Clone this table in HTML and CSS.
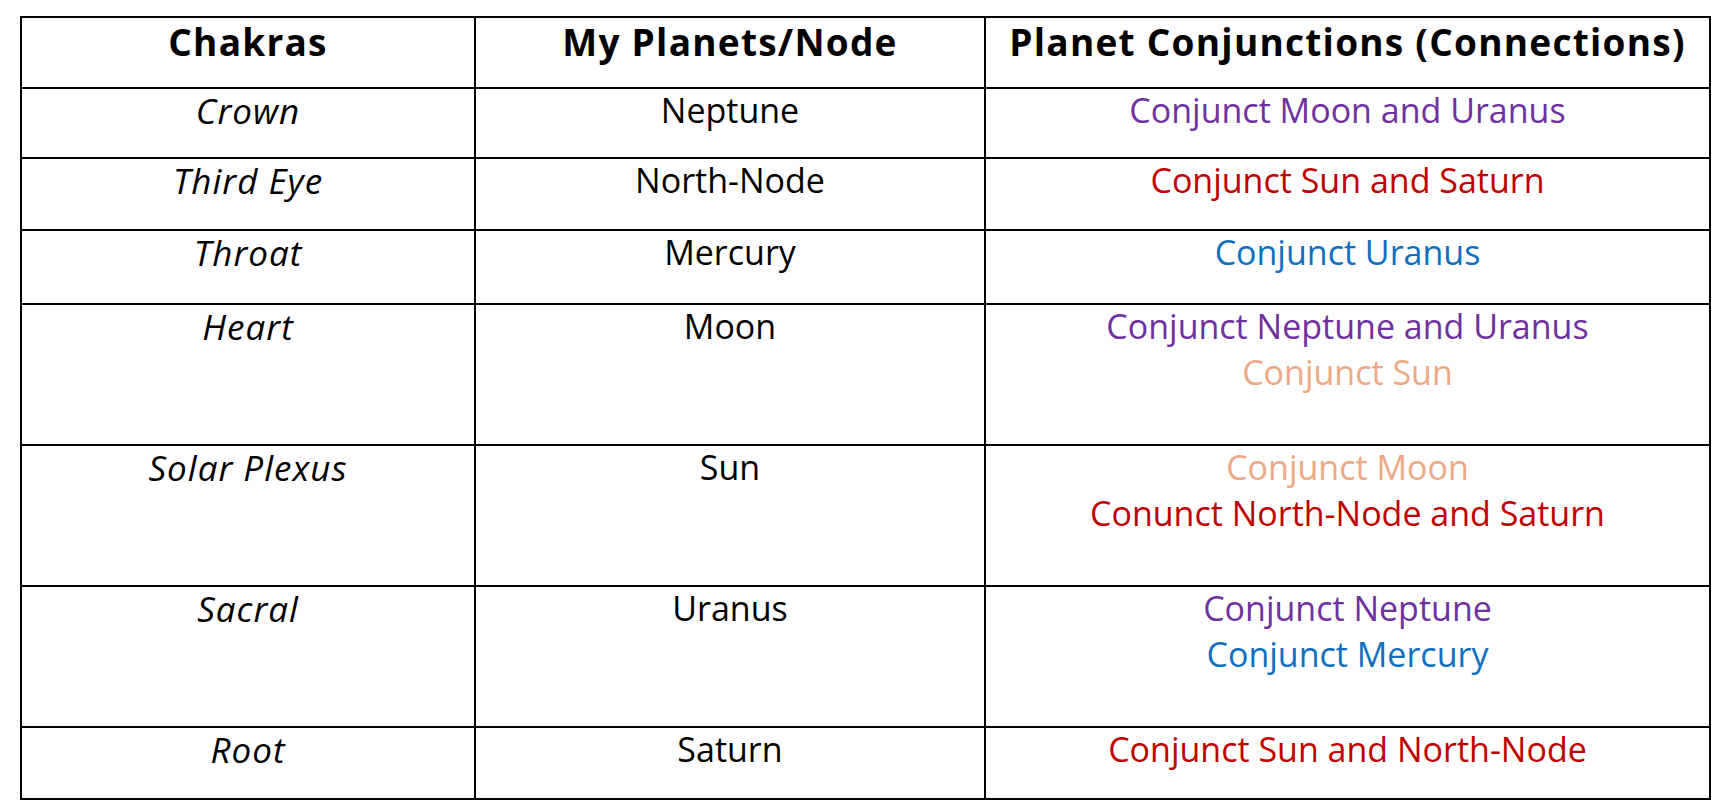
FILE: index.html
```html
<!DOCTYPE html>
<html lang="en">
<head>
<meta charset="utf-8">
<title>Chakras and Planets</title>
<link rel="stylesheet" href="styles.css">
</head>
<body>
<table class="chart">
  <colgroup>
    <col class="col-chakra">
    <col class="col-planet">
    <col class="col-conj">
  </colgroup>
  <thead>
    <tr class="row-head">
      <th>Chakras</th>
      <th>My Planets/Node</th>
      <th>Planet Conjunctions (Connections)</th>
    </tr>
  </thead>
  <tbody>
    <tr class="row-a">
      <td class="chakra">Crown</td>
      <td>Neptune</td>
      <td><span class="line c-purple">Conjunct Moon and Uranus</span></td>
    </tr>
    <tr class="row-b">
      <td class="chakra">Third Eye</td>
      <td>North-Node</td>
      <td><span class="line c-red">Conjunct Sun and Saturn</span></td>
    </tr>
    <tr class="row-c">
      <td class="chakra">Throat</td>
      <td>Mercury</td>
      <td><span class="line c-blue">Conjunct Uranus</span></td>
    </tr>
    <tr class="row-tall">
      <td class="chakra">Heart</td>
      <td>Moon</td>
      <td><span class="line c-purple">Conjunct Neptune and Uranus</span><span class="line c-peach">Conjunct Sun</span></td>
    </tr>
    <tr class="row-tall">
      <td class="chakra">Solar Plexus</td>
      <td>Sun</td>
      <td><span class="line c-peach">Conjunct Moon</span><span class="line c-red">Conunct North-Node and Saturn</span></td>
    </tr>
    <tr class="row-tall">
      <td class="chakra">Sacral</td>
      <td>Uranus</td>
      <td><span class="line c-purple">Conjunct Neptune</span><span class="line c-blue">Conjunct Mercury</span></td>
    </tr>
    <tr class="row-b">
      <td class="chakra">Root</td>
      <td>Saturn</td>
      <td><span class="line c-red">Conjunct Sun and North-Node</span></td>
    </tr>
  </tbody>
</table>
</body>
</html>
```

FILE: styles.css
```css
html, body {
  margin: 0;
  padding: 0;
  background: #ffffff;
}

body {
  padding: 16px 0 0 20px;
  font-family: "Open Sans", "Liberation Sans", sans-serif;
  color: #000000;
}

.chart {
  border-collapse: collapse;
  table-layout: fixed;
  width: 1689px;
}

.col-chakra { width: 454px; }
.col-planet { width: 510px; }
.col-conj { width: 725px; }

.chart th,
.chart td {
  border: 2px solid #000000;
  text-align: center;
  vertical-align: top;
  padding: 0 8px;
  font-size: 34px;
  line-height: 43px;
  white-space: nowrap;
}

.chart th {
  font-weight: 700;
  font-size: 37px;
  letter-spacing: 1.25px;
  padding-top: 2px;
}

.chart .chakra {
  font-style: italic;
  font-size: 35px;
  letter-spacing: 1px;
}

.line {
  display: block;
}

.line + .line {
  margin-top: 3px;
}

.row-head { height: 71px; }
.row-a { height: 70px; }
.row-b { height: 72px; }
.row-c { height: 74px; }
.row-tall { height: 141px; }

.c-purple { color: #7030a0; }
.c-red { color: #c00000; }
.c-blue { color: #0f6fbf; }
.c-peach { color: #eda985; }
```
